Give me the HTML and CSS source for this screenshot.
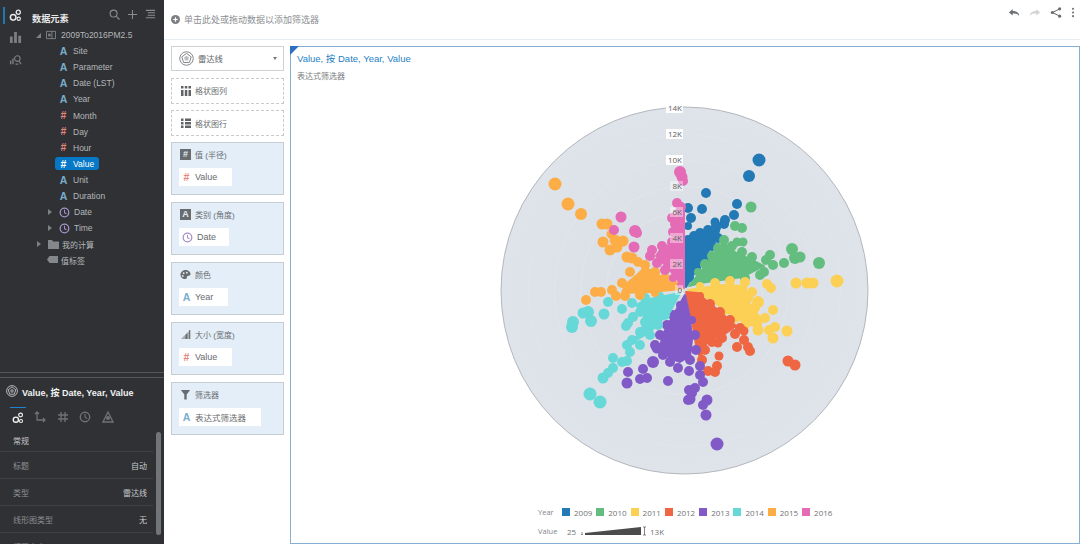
FILE: index.html
```html
<!DOCTYPE html>
<html lang="zh">
<head>
<meta charset="utf-8">
<title>雷达线</title>
<link rel="stylesheet" href="styles.css">
</head>
<body>
<svg class="defs" width="0" height="0" aria-hidden="true">
  <defs>
    <symbol id="clock" viewBox="0 0 12 12"><circle cx="6" cy="6" r="4.7" fill="none" stroke="currentColor" stroke-width="1.4"/><path d="M6 3v3.2l2.2 1.2" fill="none" stroke="currentColor" stroke-width="1.1"/></symbol>
    <symbol id="gears" viewBox="0 0 14 14"><circle cx="4.5" cy="9" r="3" fill="none" stroke="currentColor" stroke-width="1.6"/><circle cx="10" cy="3.5" r="2.2" fill="none" stroke="currentColor" stroke-width="1.4"/><circle cx="10.5" cy="10.5" r="1.8" fill="none" stroke="currentColor" stroke-width="1.2"/></symbol>
    <symbol id="radar" viewBox="0 0 16 16"><circle cx="8" cy="8" r="7.200" fill="none" stroke="currentColor" stroke-width="1"/><path d="M8 2.500l5 3.800-1.900 6H4.900L3 6.300z" fill="none" stroke="currentColor" stroke-width="1"/><path d="M8 5l2.600 2-1 3.200H6.400l-1-3.200z" fill="currentColor" opacity=".5"/></symbol>
  </defs>
</svg>
<div class="app">
  <aside class="sidebar">
    <section class="data-pane">
      <nav class="rail">
        <span class="rail-item active"><svg class="rail-ic light"><use href="#gears"/></svg></span>
        <span class="rail-item"><svg class="rail-ic" viewBox="0 0 14 14"><path d="M1 6h3v7H1zM5.500 1h3v12h-3zM10 5h3v8h-3z" fill="currentColor"/></svg></span>
        <span class="rail-item"><svg class="rail-ic" viewBox="0 0 14 14"><path d="M1 8h1.500v4H1zM3.500 6H5v6H3.500z" fill="currentColor"/><circle cx="9" cy="6" r="3" fill="none" stroke="currentColor" stroke-width="1.200"/><path d="M11 9l2 3M7 12h3" stroke="currentColor" stroke-width="1.200"/></svg></span>
      </nav>
      <div class="tree-col">
        <header class="tree-head">
          <h2 class="tree-title">数据元素</h2>
          <div class="tree-tools">
            <svg class="tool" viewBox="0 0 12 12"><circle cx="5" cy="5" r="3.800" fill="none" stroke="currentColor" stroke-width="1.200"/><path d="M8 8l3.500 3.500" stroke="currentColor" stroke-width="1.300"/></svg>
            <svg class="tool" viewBox="0 0 12 12"><path d="M6 1v10M1 6h10" stroke="currentColor" stroke-width="1.200"/></svg>
            <svg class="tool" viewBox="0 0 12 12"><path d="M1 1.500h10M3 4.200h8M3 6.800h8M1 9.500h10" stroke="currentColor" stroke-width="1.100"/></svg>
          </div>
        </header>
        <ul class="tree">
          <li class="row lv0"><i class="tri down"></i><svg class="db" viewBox="0 0 11 11"><path d="M.5 1.500h10v8H.5zM6.500 1.500v8" fill="none" stroke="currentColor"/><path d="M2.500 4h2.500v3H2.500z" fill="currentColor"/></svg><span>2009To2016PM2.5</span></li>
          <li class="row lv1"><b class="g-a">A</b><span>Site</span></li>
          <li class="row lv1"><b class="g-a">A</b><span>Parameter</span></li>
          <li class="row lv1"><b class="g-a">A</b><span>Date (LST)</span></li>
          <li class="row lv1"><b class="g-a">A</b><span>Year</span></li>
          <li class="row lv1"><b class="g-n">#</b><span>Month</span></li>
          <li class="row lv1"><b class="g-n">#</b><span>Day</span></li>
          <li class="row lv1"><b class="g-n">#</b><span>Hour</span></li>
          <li class="row lv1"><span class="selected"><b class="g-n white">#</b><span>Value</span></span></li>
          <li class="row lv1"><b class="g-a">A</b><span>Unit</span></li>
          <li class="row lv1"><b class="g-a">A</b><span>Duration</span></li>
          <li class="row lv2"><i class="tri"></i><svg class="ck"><use href="#clock"/></svg><span>Date</span></li>
          <li class="row lv2"><i class="tri"></i><svg class="ck"><use href="#clock"/></svg><span>Time</span></li>
          <li class="row lv3"><i class="tri"></i><svg class="folder" viewBox="0 0 11 9"><path d="M0 0h4l1 1.500h6V9H0z" fill="currentColor"/></svg><span>我的计算</span></li>
          <li class="row lv4"><svg class="tag" viewBox="0 0 11 8"><path d="M2.500 0H11v7H2.500L0 3.500z" fill="currentColor"/></svg><span>值标签</span></li>
        </ul>
      </div>
    </section>
    <section class="prop-pane">
      <header class="prop-head"><svg class="prop-radar"><use href="#radar"/></svg><strong>Value, 按 Date, Year, Value</strong></header>
      <div class="prop-tabs">
        <span class="ptab on"><svg class="pic"><use href="#gears"/></svg></span>
        <span class="ptab"><svg class="pic" viewBox="0 0 12 12"><path d="M3 1v8h8M1 3l2-2 2 2M9 7l2 2-2 2" fill="none" stroke="currentColor" stroke-width="1.300"/></svg></span>
        <span class="ptab"><svg class="pic" viewBox="0 0 12 12"><path d="M4 1v10M8 1v10M1 4h10M1 8h10" stroke="currentColor" stroke-width="1.300"/></svg></span>
        <span class="ptab"><svg class="pic"><use href="#clock"/></svg></span>
        <span class="ptab"><svg class="pic" viewBox="0 0 12 12"><path d="M6 1l5 10H1z" fill="none" stroke="currentColor" stroke-width="1.300"/><circle cx="6" cy="7" r="2" fill="currentColor"/></svg></span>
      </div>
      <div class="prop-body">
        <div class="prop-list">
          <div class="prop-section">常规</div>
          <div class="prop-row"><span>标题</span><em>自动</em></div>
          <div class="prop-row"><span>类型</span><em>雷达线</em></div>
          <div class="prop-row"><span>线形图类型</span><em>无</em></div>
          <div class="prop-row"><span>视图大小</span><em></em></div>
        </div>
        <div class="scrollbar"></div>
      </div>
    </section>
  </aside>
  <main class="main">
    <header class="filter-bar">
      <svg class="add" viewBox="0 0 10 10"><circle cx="5" cy="5" r="5" fill="currentColor"/><path d="M5 2.500v5M2.500 5h5" stroke="#fff" stroke-width="1.300"/></svg>
      <span class="filter-hint">单击此处或拖动数据以添加筛选器</span>
      <div class="actions">
        <svg class="act" viewBox="0 0 14 10"><path d="M1 5l4.500-4v2.300c4.500 0 7.500 2 7.500 5.700-1.500-2.300-3.500-2.900-7.500-2.900V8.500z" fill="#707376"/></svg>
        <svg class="act" viewBox="0 0 14 10"><path d="M13 5L8.500 1v2.300C4 3.300 1 5.300 1 9c1.500-2.300 3.500-2.900 7.500-2.900V8.500z" fill="#d3d5d8"/></svg>
        <svg class="act" viewBox="0 0 12 12"><path d="M10 2L2 6l8 4" fill="none" stroke="#6a6d70" stroke-width="1.100"/><circle cx="10" cy="2" r="1.700" fill="#6a6d70"/><circle cx="2" cy="6" r="1.700" fill="#6a6d70"/><circle cx="10" cy="10" r="1.700" fill="#6a6d70"/></svg>
        <svg class="act dots" viewBox="0 0 4 12"><circle cx="2" cy="2" r="1.200" fill="#75787c"/><circle cx="2" cy="6" r="1.200" fill="#75787c"/><circle cx="2" cy="10" r="1.200" fill="#75787c"/></svg>
      </div>
    </header>
    <div class="workspace">
      <div class="config">
        <div class="type-select"><svg class="type-radar"><use href="#radar"/></svg><span>雷达线</span><i class="caret"></i></div>
        <div class="dash"><svg class="dash-ic" viewBox="0 0 12 12"><path d="M1 1h2.500v2.500H1zM4.800 1h2.500v2.500H4.800zM8.500 1H11v2.500H8.500zM1 5h2.500v6H1zM4.800 5h2.500v6H4.800zM8.500 5H11v6H8.500z" fill="currentColor"/></svg><span>格状图列</span></div>
        <div class="dash"><svg class="dash-ic" viewBox="0 0 12 12"><path d="M1 1.500h2.500V4H1zM5 1.500h6V4H5zM1 5h2.500v2.500H1zM5 5h6v2.500H5zM1 8.500h2.500V11H1zM5 8.500h6V11H5z" fill="currentColor"/></svg><span>格状图行</span></div>
        <div class="well">
          <div class="well-head"><span class="box-ic">#</span><span>值 (半径)</span></div>
          <div class="pill w-value"><b class="g-n">#</b><span>Value</span></div>
        </div>
        <div class="well">
          <div class="well-head"><span class="box-ic">A</span><span>类别 (角度)</span></div>
          <div class="pill w-date"><svg class="ck"><use href="#clock"/></svg><span>Date</span></div>
        </div>
        <div class="well">
          <div class="well-head"><svg class="well-ic" viewBox="0 0 12 12"><path d="M6 1c3 0 5.500 2 5.500 4.500 0 2-2 2-3 2s-1 1-1 2-1 1.500-2 1.500C2.500 11 .5 8.500.5 6S3 1 6 1z" fill="currentColor"/><circle cx="4" cy="4.500" r="1" fill="#e3eef8"/><circle cx="7.500" cy="4" r="1" fill="#e3eef8"/><circle cx="3" cy="7.500" r="1" fill="#e3eef8"/></svg><span>颜色</span></div>
          <div class="pill w-year"><b class="g-a">A</b><span>Year</span></div>
        </div>
        <div class="well">
          <div class="well-head"><svg class="well-ic" viewBox="0 0 12 12"><path d="M1 11L11 1v10z" fill="#a9aeb3"/><path d="M6 6.500V11h2V4.500zM10 1h1.200v10H10z" fill="currentColor"/></svg><span>大小 (宽度)</span></div>
          <div class="pill w-value"><b class="g-n">#</b><span>Value</span></div>
        </div>
        <div class="well">
          <div class="well-head"><svg class="well-ic" viewBox="0 0 12 12"><path d="M1 1h10L7.300 6v5.500H4.700V6z" fill="currentColor"/></svg><span>筛选器</span></div>
          <div class="pill w-filter"><b class="g-a">A</b><span>表达式筛选器</span></div>
        </div>
      </div>
      <section class="viz">
        <i class="corner"></i>
        <h1 class="viz-title">Value, 按 Date, Year, Value</h1>
        <p class="viz-sub">表达式筛选器</p>
        <svg class="chart" viewBox="291 85 788 415" width="788" height="415">
          <defs>
            <radialGradient id="plate"><stop offset="0" stop-color="#d9dee5"/><stop offset="1" stop-color="#dfe3ea"/></radialGradient>
          </defs>
          <circle cx="684.500" cy="290.500" r="183.500" fill="url(#plate)" stroke="#b3b7bc"/>
          <g class="rings">
            <circle cx="684.500" cy="290.500" r="26"/><circle cx="684.500" cy="290.500" r="52"/><circle cx="684.500" cy="290.500" r="78"/><circle cx="684.500" cy="290.500" r="104"/><circle cx="684.500" cy="290.500" r="130"/><circle cx="684.500" cy="290.500" r="156"/>
          </g>
          <g class="s s09">
            <polygon points="686,287 686,242 696,236 708,233 720,228 716,240 700,264"/>
            <circle cx="759" cy="160" r="6.500"/><circle cx="749" cy="176" r="6"/><circle cx="706" cy="193" r="5"/><circle cx="702" cy="209" r="5"/><circle cx="737" cy="204" r="5"/><circle cx="734" cy="215" r="5"/><circle cx="725" cy="220" r="5"/><circle cx="715" cy="222" r="4.500"/><circle cx="691" cy="218" r="5"/><circle cx="688" cy="208" r="5"/><circle cx="688" cy="226" r="4"/>
            <circle cx="688" cy="240" r="5"/><circle cx="694" cy="236" r="5"/><circle cx="700" cy="233" r="5"/><circle cx="708" cy="230" r="5"/><circle cx="716" cy="226" r="5"/><circle cx="724" cy="224" r="5"/><circle cx="718" cy="238" r="5"/><circle cx="712" cy="246" r="5"/><circle cx="704" cy="258" r="5"/><circle cx="697" cy="268" r="4"/><circle cx="690" cy="278" r="4"/>
          </g>
          <g class="s s10">
            <polygon points="689,286 702,270 714,254 724,243 736,253 752,260 764,266 742,277 700,283"/>
            <circle cx="735" cy="226" r="5"/><circle cx="742" cy="228" r="5"/><circle cx="751" cy="207" r="5.500"/><circle cx="737" cy="242" r="4.500"/><circle cx="743" cy="242" r="4.500"/><circle cx="792" cy="249" r="6"/><circle cx="795" cy="258" r="6"/><circle cx="800" cy="257" r="5.500"/><circle cx="784" cy="263" r="5"/><circle cx="819" cy="263" r="6"/><circle cx="770" cy="255" r="5"/><circle cx="773" cy="265" r="5"/><circle cx="766" cy="260" r="5"/><circle cx="764" cy="272" r="5"/>
            <circle cx="698" cy="272" r="4"/><circle cx="705" cy="264" r="5"/><circle cx="712" cy="256" r="5"/><circle cx="718" cy="248" r="5"/><circle cx="724" cy="240" r="5"/><circle cx="732" cy="246" r="5"/><circle cx="742" cy="252" r="5"/><circle cx="752" cy="257" r="5"/><circle cx="760" cy="275" r="5"/><circle cx="745" cy="278" r="5"/><circle cx="730" cy="279" r="5"/>
          </g>
          <g class="s s11">
            <polygon points="688,290 722,285 746,286 746,298 762,320 760,328 745,323 730,314 714,302 700,294"/>
            <circle cx="767" cy="284" r="5"/><circle cx="771" cy="288" r="5"/><circle cx="796" cy="283" r="5.500"/><circle cx="807" cy="283" r="5.500"/><circle cx="813" cy="283" r="5.500"/><circle cx="837" cy="281" r="6.500"/><circle cx="773" cy="310" r="5"/><circle cx="787" cy="331" r="5.500"/><circle cx="773" cy="338" r="5.500"/><circle cx="758" cy="302" r="6"/><circle cx="752" cy="292" r="5"/><circle cx="758" cy="330" r="5.500"/><circle cx="775" cy="327" r="5"/>
            <circle cx="700" cy="286" r="4"/><circle cx="715" cy="283" r="5"/><circle cx="730" cy="281" r="5"/><circle cx="745" cy="282" r="5"/><circle cx="748" cy="298" r="5"/><circle cx="755" cy="308" r="5"/><circle cx="765" cy="318" r="5"/><circle cx="769" cy="330" r="5"/><circle cx="745" cy="325" r="5"/><circle cx="735" cy="318" r="5"/><circle cx="725" cy="310" r="5"/><circle cx="712" cy="300" r="4"/>
          </g>
          <g class="s s12">
            <polygon points="686,292 697,293 718,310 736,326 722,336 708,340 700,358 696,345 692,320"/>
            <circle cx="744" cy="331" r="4.500"/><circle cx="744" cy="340" r="5"/><circle cx="737" cy="347" r="5"/><circle cx="748" cy="347" r="5"/><circle cx="750" cy="351" r="5"/><circle cx="719" cy="356" r="4.500"/><circle cx="717" cy="366" r="5"/><circle cx="715" cy="372" r="5"/><circle cx="708" cy="371" r="5"/><circle cx="788" cy="361" r="5.500"/><circle cx="795" cy="365" r="5.500"/><circle cx="718" cy="343" r="4.500"/>
            <circle cx="700" cy="296" r="4"/><circle cx="710" cy="304" r="5"/><circle cx="720" cy="312" r="5"/><circle cx="730" cy="320" r="5"/><circle cx="740" cy="328" r="5"/><circle cx="735" cy="334" r="5"/><circle cx="722" cy="338" r="5"/><circle cx="712" cy="342" r="5"/><circle cx="705" cy="350" r="5"/><circle cx="702" cy="360" r="5"/>
          </g>
          <g class="s s13">
            <polygon points="685,295 675,312 662,336 660,350 670,358 680,362 690,356 692,340 690,318"/>
            <circle cx="628" cy="372" r="5"/><circle cx="627" cy="383" r="5.500"/><circle cx="643" cy="369" r="5"/><circle cx="640" cy="379" r="5"/><circle cx="647" cy="378" r="5"/><circle cx="668" cy="381" r="5"/><circle cx="653" cy="362" r="6"/><circle cx="657" cy="348" r="5.500"/><circle cx="689" cy="390" r="5"/><circle cx="688" cy="400" r="5"/><circle cx="689" cy="371" r="5"/><circle cx="700" cy="366" r="5"/><circle cx="700" cy="375" r="5"/><circle cx="703" cy="382" r="5"/><circle cx="695" cy="388" r="5"/><circle cx="692" cy="393" r="5"/><circle cx="690" cy="399" r="5.500"/><circle cx="707" cy="400" r="5.500"/><circle cx="703" cy="405" r="5"/><circle cx="706" cy="415" r="5.500"/><circle cx="717" cy="444" r="6.500"/>
            <circle cx="680" cy="305" r="4"/><circle cx="673" cy="315" r="5"/><circle cx="667" cy="325" r="5"/><circle cx="660" cy="335" r="5"/><circle cx="655" cy="345" r="5"/><circle cx="663" cy="355" r="5"/><circle cx="670" cy="362" r="5"/><circle cx="678" cy="368" r="5"/><circle cx="690" cy="360" r="5"/><circle cx="696" cy="350" r="5"/><circle cx="695" cy="335" r="5"/><circle cx="692" cy="320" r="4"/>
          </g>
          <g class="s s14">
            <polygon points="680,293 645,300 636,305 644,316 642,330 630,344 650,332 670,312"/>
            <circle cx="573" cy="322" r="6"/><circle cx="572" cy="327" r="6"/><circle cx="588" cy="312" r="6"/><circle cx="583" cy="313" r="5.500"/><circle cx="591" cy="321" r="6"/><circle cx="604" cy="314" r="5.500"/><circle cx="622" cy="309" r="5"/><circle cx="608" cy="302" r="5"/><circle cx="633" cy="317" r="5"/><circle cx="628" cy="323" r="5"/><circle cx="626" cy="326" r="5"/><circle cx="613" cy="358" r="5"/><circle cx="627" cy="361" r="5"/><circle cx="622" cy="362" r="5"/><circle cx="613" cy="368" r="5"/><circle cx="608" cy="373" r="5"/><circle cx="603" cy="378" r="5.500"/><circle cx="590" cy="394" r="6.500"/><circle cx="600" cy="402" r="6.500"/><circle cx="627" cy="345" r="5"/><circle cx="630" cy="352" r="5"/>
            <circle cx="660" cy="296" r="4"/><circle cx="645" cy="298" r="5"/><circle cx="632" cy="303" r="5"/><circle cx="640" cy="312" r="5"/><circle cx="645" cy="322" r="5"/><circle cx="640" cy="332" r="5"/><circle cx="632" cy="340" r="5"/><circle cx="640" cy="345" r="5"/><circle cx="650" cy="335" r="5"/><circle cx="658" cy="325" r="5"/><circle cx="665" cy="315" r="5"/>
          </g>
          <g class="s s15">
            <polygon points="682,289 645,267 638,274 625,285 622,293 650,292"/>
            <circle cx="555" cy="184" r="6.500"/><circle cx="568" cy="204" r="6.500"/><circle cx="581" cy="214" r="6"/><circle cx="602" cy="224" r="5.500"/><circle cx="607" cy="224" r="5.500"/><circle cx="603" cy="242" r="5.500"/><circle cx="610" cy="250" r="5.500"/><circle cx="615" cy="240" r="5.500"/><circle cx="623" cy="241" r="5.500"/><circle cx="617" cy="247" r="5.500"/><circle cx="627" cy="257" r="5.500"/><circle cx="632" cy="258" r="5.500"/><circle cx="611" cy="234" r="4.500"/><circle cx="586" cy="300" r="5"/><circle cx="595" cy="292" r="5"/><circle cx="601" cy="292" r="5"/>
            <circle cx="675" cy="285" r="4"/><circle cx="665" cy="278" r="5"/><circle cx="655" cy="272" r="5"/><circle cx="645" cy="265" r="5"/><circle cx="638" cy="262" r="5"/><circle cx="630" cy="272" r="5"/><circle cx="622" cy="283" r="5"/><circle cx="612" cy="290" r="5"/><circle cx="616" cy="296" r="5"/><circle cx="625" cy="296" r="5"/><circle cx="640" cy="295" r="5"/><circle cx="655" cy="293" r="4"/>
          </g>
          <g class="s s16">
            <polygon points="684,288 684,210 678,210 677,240 660,250 656,256 668,268"/>
            <circle cx="621" cy="217" r="5.500"/><circle cx="614" cy="230" r="5"/><circle cx="635" cy="231" r="6"/><circle cx="637" cy="233" r="5"/><circle cx="634" cy="247" r="5.500"/><circle cx="680" cy="172" r="6"/><circle cx="682" cy="177" r="5.500"/><circle cx="683" cy="181" r="5"/><circle cx="677" cy="203" r="5"/><circle cx="681" cy="207" r="5"/><circle cx="672" cy="218" r="5"/>
            <circle cx="680" cy="212" r="5"/><circle cx="675" cy="224" r="5"/><circle cx="673" cy="232" r="5"/><circle cx="672" cy="242" r="5"/><circle cx="662" cy="246" r="5"/><circle cx="652" cy="250" r="5"/><circle cx="650" cy="256" r="5"/><circle cx="657" cy="263" r="5"/><circle cx="665" cy="270" r="5"/><circle cx="673" cy="278" r="4"/><circle cx="680" cy="285" r="3"/>
          </g>
          <g class="ticks">
            <rect class="tick-bg solid" x="666" y="103" width="17" height="10"/><text x="682" y="111">14K</text>
            <rect class="tick-bg solid" x="666" y="129" width="17" height="10"/><text x="682" y="137">12K</text>
            <rect class="tick-bg solid" x="666" y="155" width="17" height="10"/><text x="682" y="163">10K</text>
            <rect class="tick-bg" x="670" y="181" width="13" height="10"/><text x="682" y="189">8K</text>
            <rect class="tick-bg" x="670" y="207" width="13" height="10"/><text x="682" y="215">6K</text>
            <rect class="tick-bg" x="670" y="233" width="13" height="10"/><text x="682" y="241">4K</text>
            <rect class="tick-bg" x="670" y="259" width="13" height="10"/><text x="682" y="267">2K</text>
            <rect class="tick-bg" x="675" y="285" width="8" height="10"/><text x="682" y="293">0</text>
          </g>
        </svg>
        <div class="legend">
          <div class="leg-row">
            <span class="leg-name">Year</span>
            <span class="leg-item"><i class="sw c09"></i>2009</span>
            <span class="leg-item"><i class="sw c10"></i>2010</span>
            <span class="leg-item"><i class="sw c11"></i>2011</span>
            <span class="leg-item"><i class="sw c12"></i>2012</span>
            <span class="leg-item"><i class="sw c13"></i>2013</span>
            <span class="leg-item"><i class="sw c14"></i>2014</span>
            <span class="leg-item"><i class="sw c15"></i>2015</span>
            <span class="leg-item"><i class="sw c16"></i>2016</span>
          </div>
          <div class="leg-row size-row">
            <span class="leg-name">Value</span>
            <span class="size-min">25</span>
            <svg class="wedge" viewBox="0 0 66 10" width="66" height="10"><path d="M0 7h2M0 8.500h2" stroke="#666" stroke-width=".7"/><path d="M4 7L60 1v8H4z" fill="#4b4b4b"/><path d="M62 1h3M63.500 1v8M62 9h3" stroke="#666" stroke-width=".8" fill="none"/></svg>
            <span class="size-max">13K</span>
          </div>
        </div>
      </section>
    </div>
  </main>
</div>
</body>
</html>
```
FILE: styles.css
```css
* { box-sizing: border-box; margin: 0; padding: 0; }
html, body { width: 1080px; height: 544px; overflow: hidden; background: #fff; }
body { font-family: "Liberation Sans", "Noto Sans CJK SC", sans-serif; font-size: 8.5px; color: #6a6d70; }
.defs { display: block; height: 0; }
ul { list-style: none; }
em { font-style: normal; }
.app { display: flex; width: 1080px; height: 544px; }

/* sidebar */
.sidebar { width: 164px; flex: none; height: 544px; background: #2f3134; color: #b4b7ba; display: flex; flex-direction: column; overflow: hidden; }
.data-pane { height: 373px; flex: none; display: flex; border-bottom: 1px solid #55585b; }
.rail { width: 30px; flex: none; display: flex; flex-direction: column; padding-top: 7px; gap: 5px; }
.rail-item { height: 17px; display: flex; align-items: center; padding-left: 4px; border-left: 2px solid transparent; margin-left: 3px; color: #7c7f82; }
.rail-item.active { border-left-color: #1b79b8; }
.rail-ic { width: 13px; height: 13px; display: block; }
.rail-ic.light { color: #e8eaec; }
.tree-col { flex: 1; min-width: 0; }
.tree-head { height: 27px; display: flex; align-items: center; justify-content: space-between; padding: 0 8px 0 2px; }
.tree-title { font-size: 9.2px; font-weight: 700; color: #e6e7e8; margin-top: 9px; }
.tree-tools { display: flex; gap: 7px; margin-top: 1px; color: #898c8f; }
.tool { width: 11px; height: 11px; display: block; }
.row { height: 16.1px; display: flex; align-items: center; white-space: nowrap; }
.lv0 { padding-left: 6px; }
.lv1 { padding-left: 29px; }
.lv2 { padding-left: 18px; }
.lv3 { padding-left: 7px; }
.lv4 { padding-left: 17px; }
.lv3, .lv4 { font-size: 8px; }
.lv0 .db { margin-right: 5px; }
.g-a, .g-n { width: 9px; text-align: center; font-family: "Liberation Sans", sans-serif; font-weight: 700; font-size: 10.5px; line-height: 1; margin-right: 5px; flex: none; }
.g-a { color: #79aecb; }
.g-n { color: #e5867c; }
.g-n.white { color: #fff; }
.tri { width: 0; height: 0; border-style: solid; border-width: 3px 0 3px 4px; border-color: transparent transparent transparent #7f8285; margin-right: 7px; flex: none; }
.tri.down { border-width: 0 0 5px 5px; border-color: transparent transparent #7f8285 transparent; margin-right: 5px; }
.db { width: 10px; height: 10px; color: #85888b; flex: none; }
.ck { width: 11px; height: 11px; margin-right: 4px; color: #a592c8; flex: none; }
.folder { width: 11px; height: 9px; margin-right: 3px; color: #85888b; flex: none; }
.tag { width: 11px; height: 8px; margin-right: 3px; color: #85888b; flex: none; }
.selected { display: inline-flex; align-items: center; height: 13px; width: 44px; margin-left: -4px; padding-left: 4px; background: #0678c6; border-radius: 3px; color: #fff; }

.prop-pane { flex: 1; min-height: 0; border-top: 1px solid #55585b; margin-top: 4px; display: flex; flex-direction: column; }
.prop-head { height: 28px; flex: none; display: flex; align-items: center; padding-left: 6px; color: #f0f1f2; }
.prop-head strong { font-size: 9px; font-weight: 700; margin-left: 4px; white-space: nowrap; }
.prop-radar { width: 12px; height: 12px; color: #e0e2e4; flex: none; margin-top: -2px; }
.prop-tabs { height: 26px; flex: none; display: flex; color: #6f7275; padding-left: 10px; gap: 7px; }
.ptab { width: 15.500px; border-top: 1px solid transparent; display: flex; justify-content: center; padding-top: 4px; }
.ptab.on { border-top-color: #1b86cc; color: #f2f2f2; margin-top: 1px; }
.pic { width: 12px; height: 12px; display: block; }
.prop-body { flex: 1; min-height: 0; display: flex; }
.prop-list { width: 153px; flex: none; }
.prop-section { height: 20px; padding: 2px 0 0 13px; line-height: 16px; font-size: 8px; color: #c8cacc; border-bottom: 1px solid #3f4245; }
.prop-row { height: 27px; flex: none; display: flex; justify-content: space-between; align-items: center; padding: 0 6px 0 13px; font-size: 8px; border-bottom: 1px solid #3f4245; color: #8d9093; }
.prop-row em { color: #c8cacc; }
.scrollbar { width: 5px; height: 103px; margin: 0 0 0 3px; border-radius: 3px; background: #727578; }

/* main */
.main { flex: 1; min-width: 0; display: flex; flex-direction: column; }
.filter-bar { height: 40px; flex: none; display: flex; align-items: center; padding-left: 7px; border-bottom: 1px solid #e6eef3; }
.add { width: 9px; height: 9px; color: #7d8083; margin-right: 4px; flex: none; }
.filter-hint { font-size: 9px; color: #8b8e91; }
.actions { margin-left: auto; display: flex; align-items: center; gap: 9px; padding-right: 5px; margin-top: -14px; }
.act { width: 12px; height: 11px; display: block; }
.dots { width: 4px; }
.workspace { flex: 1; min-height: 0; display: flex; padding: 6px 0 0 7px; }
.config { width: 113px; flex: none; display: flex; flex-direction: column; }
.type-select { height: 25px; border: 1px solid #cfd2d5; display: flex; align-items: center; padding-left: 7px; color: #606366; flex: none; font-size: 8.300px; }
.type-radar { width: 15px; height: 15px; color: #7b7e81; margin-right: 4px; flex: none; }
.type-select span { margin-top: -1px; }
.caret { margin-left: auto; margin-right: 6px; border-style: solid; border-width: 3px 2.500px 0; border-color: #777 transparent transparent; }
.dash { height: 26px; margin-top: 6.500px; border: 1px dashed #c8cbce; display: flex; align-items: center; padding-left: 8px; color: #6c6f72; flex: none; font-size: 8px; }
.dash-ic { width: 12px; height: 12px; margin-right: 3px; flex: none; color: #616467; }
.well { height: 53px; margin-top: 7px; background: #e3eef8; border: 1px solid #c6cdd3; padding: 5px 0 0 7px; flex: none; font-size: 8px; }
.dash + .well { margin-top: 6px; }
.well-head { height: 13px; display: flex; align-items: center; color: #6a6d70; }
.box-ic { width: 11px; height: 11px; background: #696c6f; color: #e3eef8; font: 700 9px/11px "Liberation Sans", sans-serif; text-align: center; margin: 0 4px 0 1px; flex: none; }
.well-ic { width: 11px; height: 11px; margin: 0 4px 0 1px; color: #696c6f; flex: none; }
.pill { height: 18px; margin-top: 7px; background: #fff; display: flex; align-items: center; padding-left: 3px; color: #686b6e; font-size: 9px; }
.pill .g-a, .pill .g-n { margin-right: 4px; }
.w-value { width: 53px; }
.w-date { width: 50px; }
.w-year { width: 49px; }
.w-filter { width: 82px; font-size: 8.500px; }
.viz { position: relative; margin-left: 6px; flex: 1; min-width: 0; border: 1px solid #86afd4; display: flex; flex-direction: column; }
.corner { position: absolute; left: -1px; top: -1px; border-style: solid; border-width: 9px 9px 0 0; border-color: #2a6fc4 transparent transparent; }
.viz-title { height: 24px; padding: 5px 0 0 6px; font-size: 9.5px; line-height: 14px; font-weight: 400; color: #1f7fc4; }
.viz-sub { height: 14px; padding-left: 6px; font-size: 8px; line-height: 12px; color: #7a7d80; }
.chart { display: block; flex: none; }
.s { fill: currentColor; }
.s polygon { stroke: currentColor; stroke-width: 2; stroke-linejoin: round; }
.s09 { color: #2279b5; }
.s10 { color: #62bd7f; }
.s11 { color: #fcd055; }
.s12 { color: #ef6642; }
.s13 { color: #815ac8; }
.s14 { color: #67d8d8; }
.s15 { color: #fdad46; }
.s16 { color: #e46bb5; }
.rings circle { fill: none; stroke: #e2e6ec; stroke-width: 1; }
.ticks text { font-size: 8px; fill: #5e6164; text-anchor: end; font-family: "Open Sans", sans-serif; }
.tick-bg { fill: #fff; opacity: .4; }
.tick-bg.solid { opacity: .95; }
.legend { flex: 1; display: flex; flex-direction: column; padding: 3px 0 0 247px; font-family: "Open Sans", sans-serif; }
.leg-row { height: 18px; display: flex; align-items: center; color: #6f7275; white-space: nowrap; }
.leg-name { width: 24px; flex: none; font-size: 7.5px; color: #83868a; }
.leg-item { width: 34.300px; flex: none; display: flex; align-items: center; font-size: 8px; }
.sw { width: 8px; height: 8px; margin-right: 4px; flex: none; }
.c09 { background: #2279b5; }
.c10 { background: #62bd7f; }
.c11 { background: #fcd055; }
.c12 { background: #ef6642; }
.c13 { background: #815ac8; }
.c14 { background: #67d8d8; }
.c15 { background: #fdad46; }
.c16 { background: #e46bb5; }
.size-row { height: 20px; }
.size-row .leg-name { width: 29px; }
.size-min { width: 14px; font-size: 8px; flex: none; }
.wedge { display: block; flex: none; margin-right: 3px; }
.size-max { font-size: 8px; }
```
